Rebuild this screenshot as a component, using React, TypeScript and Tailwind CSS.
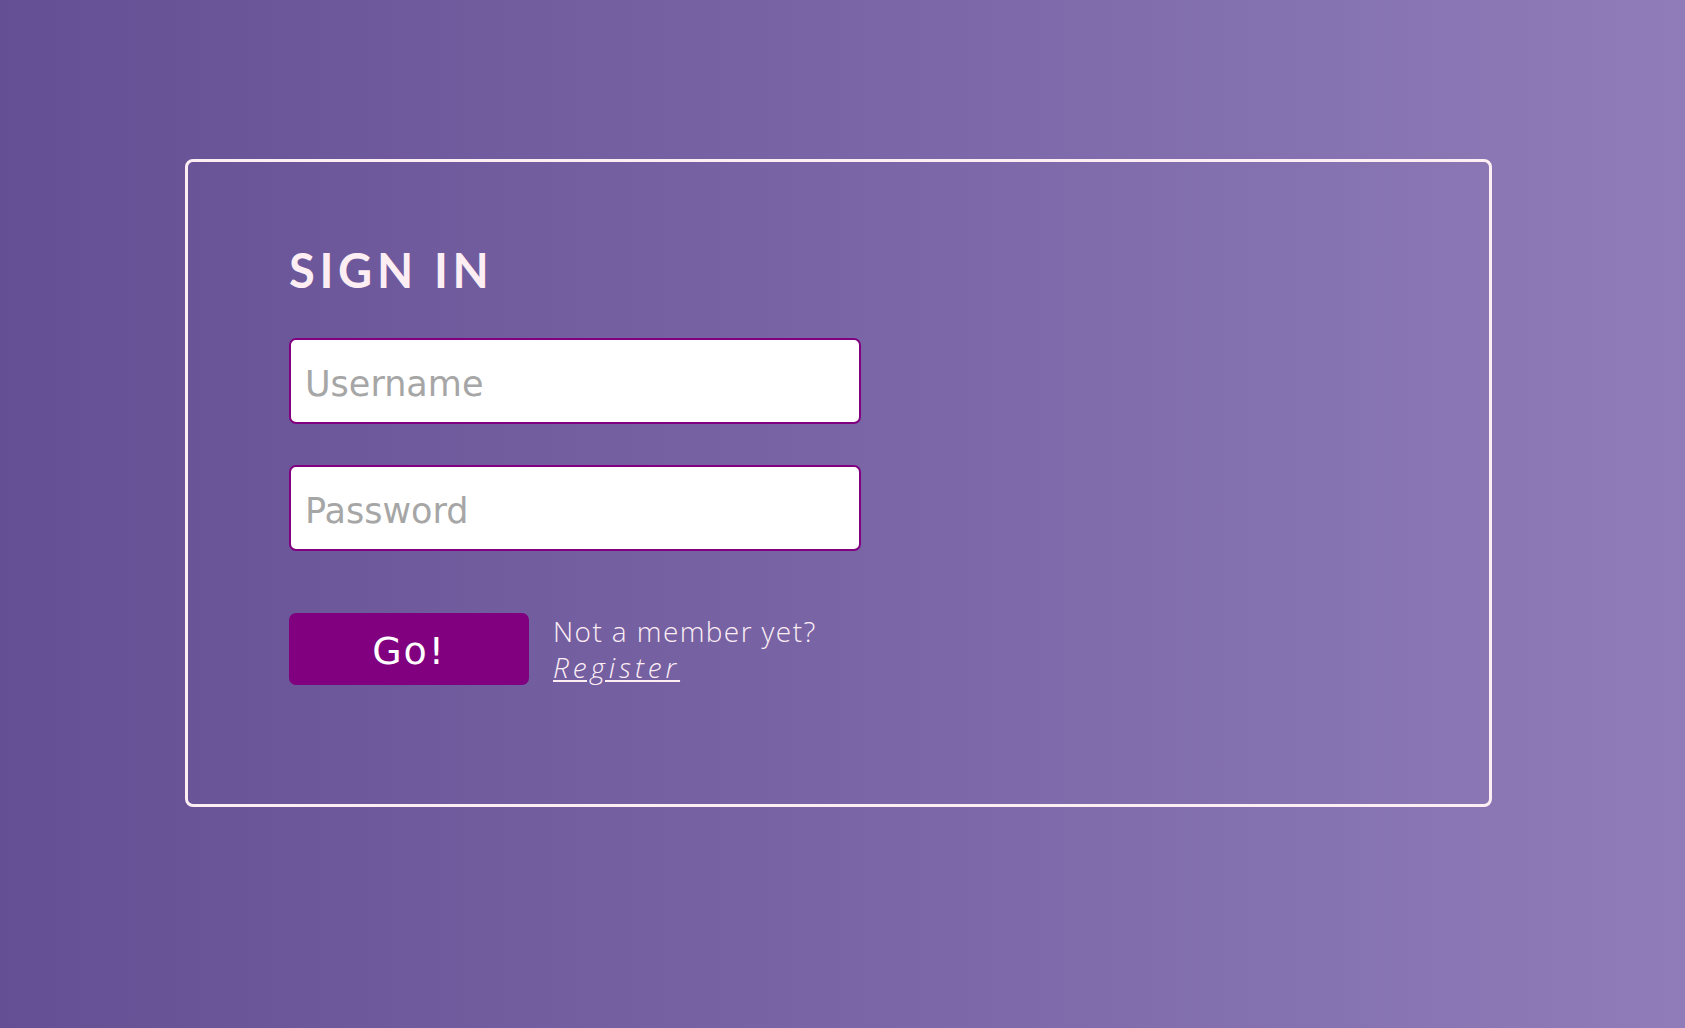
import React from "react";

const sans = "font-['DejaVu_Sans',sans-serif]";
const title = "font-['Lato','Open_Sans',sans-serif]";
const body = "font-['Open_Sans','Lato',sans-serif]";

export default function App() {
  return (
    <div className="min-h-screen w-full bg-gradient-to-r from-[#654f94] to-[#8f7cb8] pt-[159px]">
      <div className="ml-[185px] h-[648px] w-[1307px] rounded-lg border-[3px] border-[#fdeef4] pl-[101px]">
        <h1
          className={`${title} mt-[85px] text-[47px] leading-none font-bold tracking-[0.1em] text-[#fdeef4]`}
        >
          SIGN IN
        </h1>

        <form className="mt-[44px] flex flex-col" onSubmit={(e) => e.preventDefault()}>
          <input
            type="text"
            placeholder="Username"
            className={`${sans} h-[86px] w-[572px] rounded-[7px] border-2 border-[#800080] bg-white px-[14px] pt-[6px] text-[35px] text-gray-700 outline-none placeholder:text-[#a6a6a6]`}
          />
          <input
            type="password"
            placeholder="Password"
            className={`${sans} mt-[41px] h-[86px] w-[572px] rounded-[7px] border-2 border-[#800080] bg-white px-[14px] pt-[6px] text-[35px] text-gray-700 outline-none placeholder:text-[#a6a6a6]`}
          />

          <div className="mt-[62px] flex items-start gap-[24px]">
            <button
              type="submit"
              className={`${sans} h-[72px] w-[240px] rounded-[7px] bg-[#800080] pt-[5px] text-[38px] tracking-[0.05em] text-white`}
            >
              Go!
            </button>
            <p className={`${body} text-[28px] leading-[36px] font-light tracking-[0.05em] text-[#fdeef4]`}>
              Not a member yet?
              <br />
              <a href="#" className="italic underline tracking-[0.14em]">
                Register
              </a>
            </p>
          </div>
        </form>
      </div>
    </div>
  );
}
